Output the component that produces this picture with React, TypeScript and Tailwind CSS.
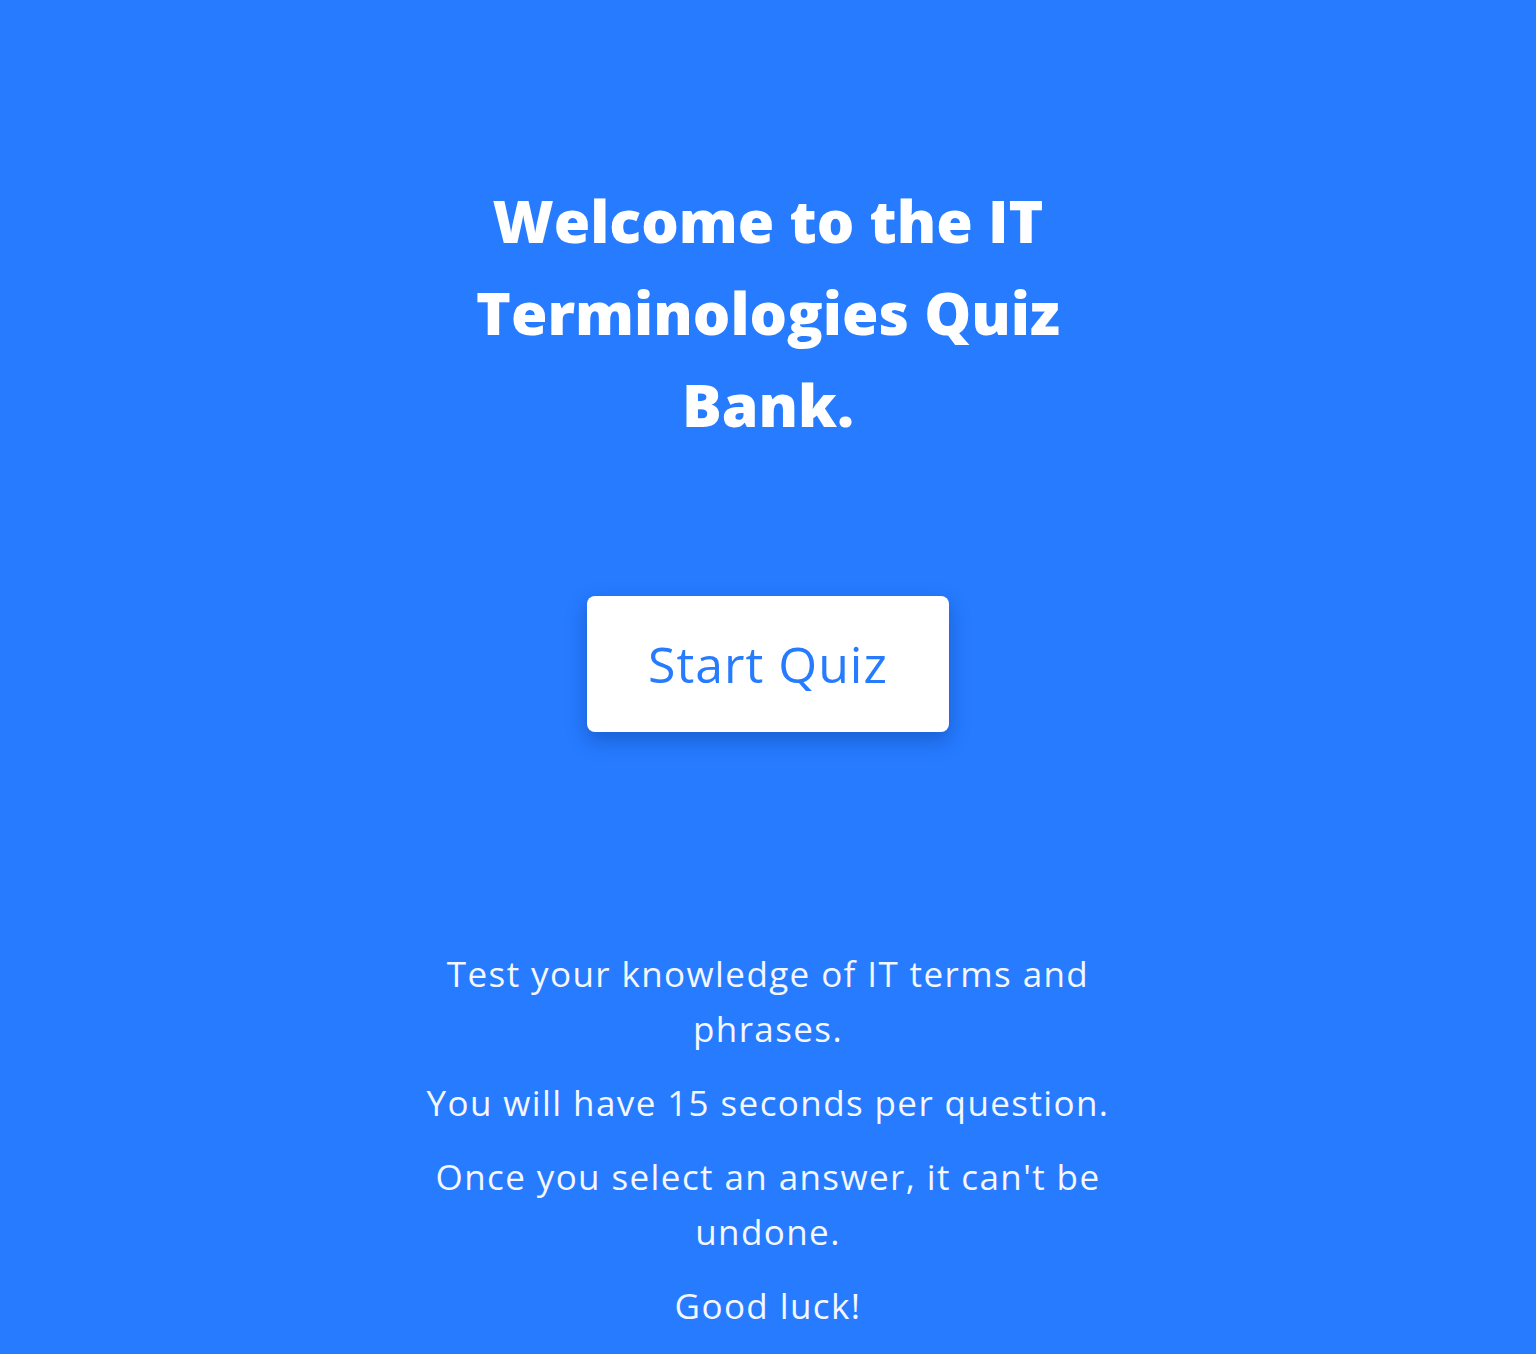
import React from 'react';

const font = { fontFamily: '"Open Sans", "Liberation Sans", sans-serif' };

export default function App() {
  const rules = [
    'Test your knowledge of IT terms and phrases.',
    'You will have 15 seconds per question.',
    "Once you select an answer, it can't be undone.",
    'Good luck!',
  ];

  return (
    <div className="min-h-[1354px] bg-[#267bff] flex flex-col items-center text-white" style={font}>
      <h1 className="mt-[174px] w-[630px] text-center text-[59px] leading-[92px] font-extrabold">
        Welcome to the IT Terminologies Quiz Bank.
      </h1>

      <button className="mt-[146px] w-[362px] h-[136px] rounded-lg bg-white text-[#267bff] text-[50px] tracking-[1px] shadow-[0_8px_20px_rgba(0,40,120,0.35)]">
        Start Quiz
      </button>

      <div className="mt-[214px] w-[710px] flex flex-col gap-[19px] text-center text-[35px] leading-[55px] tracking-[1.4px] text-[#f4f7ff]">
        {rules.map(r => (
          <p key={r}>{r}</p>
        ))}
      </div>
    </div>
  );
}
